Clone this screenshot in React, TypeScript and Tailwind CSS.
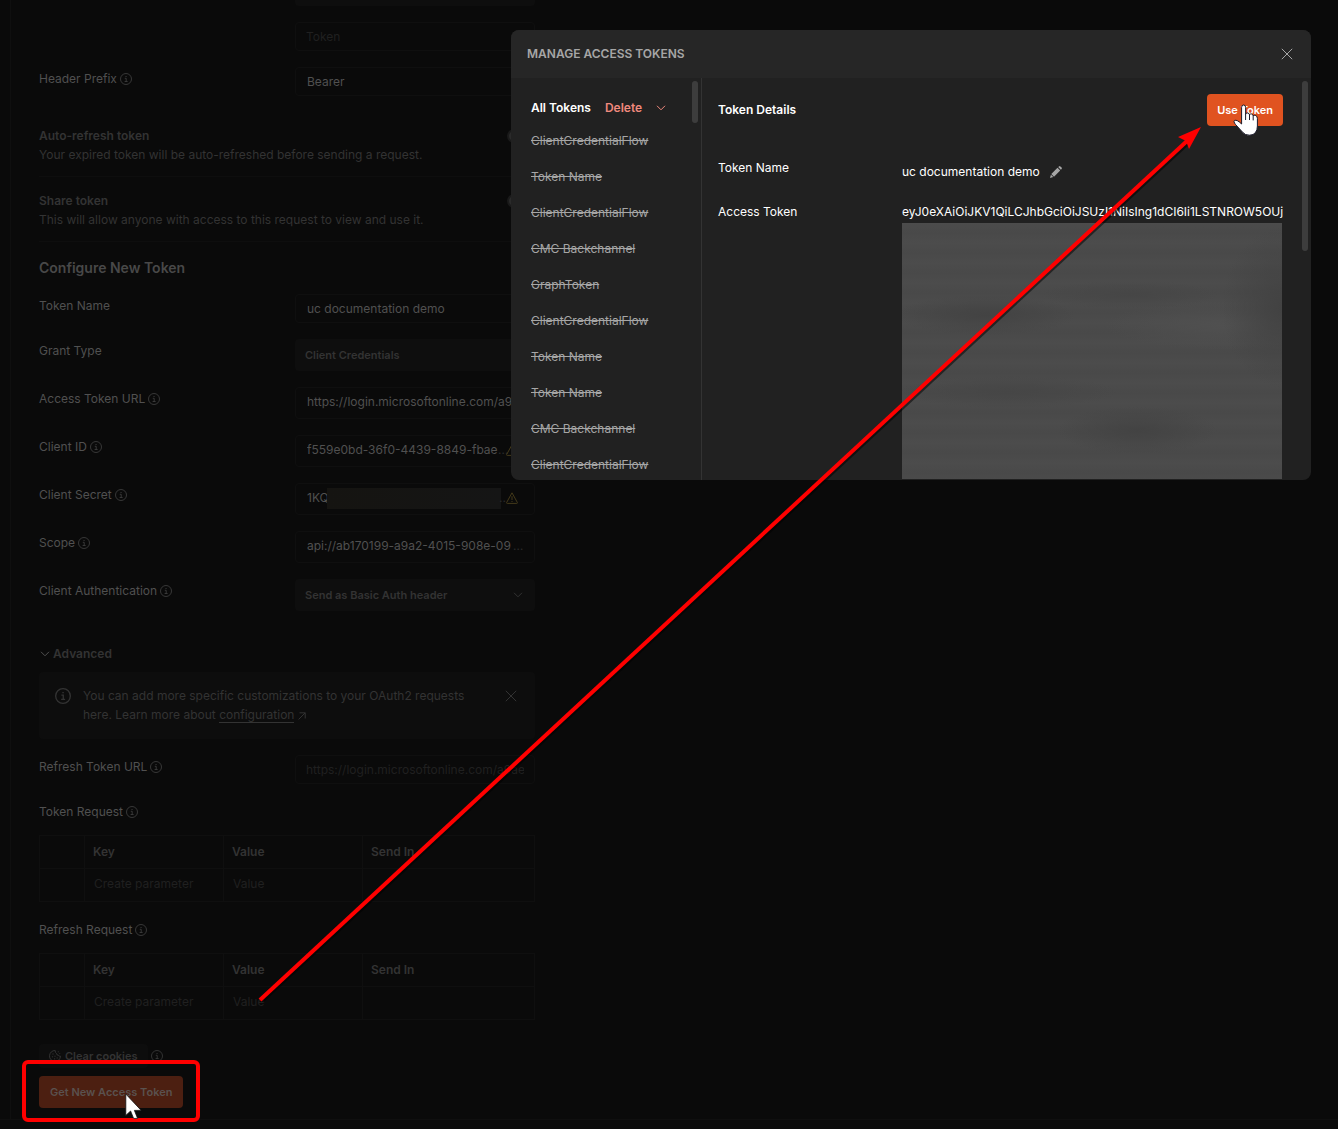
import type { ReactNode } from 'react';

function InfoIcon({ className = 'size-3' }: { className?: string }) {
  return (
    <svg viewBox="0 0 12 12" className={className} fill="none" stroke="currentColor" aria-hidden="true">
      <circle cx="6" cy="6" r="5.5" />
      <path d="M4.8 5.3H6.2V8.5M4.6 8.5H7.6" />
      <path d="M5.5 3.5H6.6" />
    </svg>
  );
}

function Chevron({ className = '' }: { className?: string }) {
  return (
    <svg viewBox="0 0 10 6" className={`h-[6px] w-[10px] ${className}`} fill="none" stroke="currentColor" aria-hidden="true">
      <path d="M1 0.8L5 4.8L9 0.8" />
    </svg>
  );
}

function Cross() {
  return (
    <svg viewBox="0 0 12 12" className="size-3" fill="none" stroke="currentColor" aria-hidden="true">
      <path d="M0.8 0.8L11.2 11.2M11.2 0.8L0.8 11.2" />
    </svg>
  );
}

function Warning() {
  return (
    <svg viewBox="0 0 12 12" className="size-3 shrink-0 text-[#443a1a]" fill="none" stroke="currentColor" aria-hidden="true">
      <path d="M6 0.8L11.4 10.6Q11.5 11.4 10.8 11.4H1.2Q0.5 11.4 0.6 10.6Z" strokeLinejoin="round" />
      <path d="M6 4.2V8M6 9V10" />
    </svg>
  );
}

function Cookie() {
  return (
    <svg viewBox="0 0 12 12" className="size-3" fill="none" stroke="currentColor" aria-hidden="true">
      <path d="M6.2 0.5A5.5 5.5 0 1 0 11.5 6.2Q10 6.6 9.4 5.2Q7.6 5.4 7.6 3.6Q6 3 6.2 0.5Z" strokeLinejoin="round" />
      <path d="M3.4 4H4.6M2.9 6.8H4.1M5.4 6.2H6.6M5 8.9H6.2M7.6 8H8.8M8.8 1.8H9.8M10.4 3.6H11.2" />
    </svg>
  );
}

function Row({ id, label, info, children }: { id: string; label: string; info?: boolean; children: ReactNode }) {
  return (
    <div className="flex items-start">
      <label htmlFor={id} className="flex h-6 w-64 shrink-0 items-center gap-[3px] text-[#505050]">
        {label}
        {info && <InfoIcon className="mb-px size-3 text-[#383838]" />}
      </label>
      {children}
    </div>
  );
}

const box = 'flex min-w-0 flex-1 items-center rounded-sm border border-[#0f0f0f] pl-[11px] text-[#505050]';

function Toggle({ id, title, text }: { id: string; title: string; text: string }) {
  return (
    <div className="flex items-start justify-between border-b border-[#0e0e0e] pt-[14px] pb-3 leading-[19px] text-[#333333]">
      <div>
        <label htmlFor={id} className="block font-semibold">{title}</label>
        <p>{text}</p>
      </div>
      <input
        id={id}
        type="checkbox"
        className="mt-[3px] h-[14px] w-7 appearance-none rounded-full border-2 border-[#1a1a1a] bg-[#2a2a2a]"
      />
    </div>
  );
}

function ParamTable({ title }: { title: string }) {
  return (
    <section>
      <h3 className="mb-[11px] flex h-6 items-center gap-[3px] text-[#505050]">
        {title}
        <InfoIcon className="mb-px size-3 text-[#383838]" />
      </h3>
      <table className="w-full table-fixed border-collapse text-left">
        <thead>
          <tr className="h-[33px] text-[#333333]">
            <th className="w-[45px] border border-[#0f0f0f]"></th>
            <th className="w-[139px] border border-[#0f0f0f] px-2 font-semibold">Key</th>
            <th className="w-[139px] border border-[#0f0f0f] px-2 font-semibold">Value</th>
            <th className="border border-[#0f0f0f] px-2 font-semibold">Send In</th>
          </tr>
        </thead>
        <tbody>
          <tr className="h-[33px]">
            <td className="border border-[#0f0f0f]"></td>
            <td className="border border-[#0f0f0f] px-[9px] pb-[2px]">
              <input aria-label={`${title} key`} placeholder="Create parameter" className="block w-full bg-transparent placeholder:text-[#202020]" />
            </td>
            <td className="border border-[#0f0f0f] px-[9px] pb-[2px]">
              <input aria-label={`${title} value`} placeholder="Value" className="block w-full bg-transparent placeholder:text-[#202020]" />
            </td>
            <td className="border border-[#0f0f0f]"></td>
          </tr>
        </tbody>
      </table>
    </section>
  );
}

function TokenForm() {
  return (
    <form className="flex w-[496px] flex-col gap-4" onSubmit={(e) => e.preventDefault()}>
      <div className="-mt-[26px] ml-64 h-8 rounded-sm bg-[#0e0e0e]" />
      <div className="ml-64 flex">
        <input aria-label="Token" placeholder="Token" className="h-[29px] w-full rounded-sm border border-[#0f0f0f] px-[10px] placeholder:text-[#202020]" />
      </div>
      <Row id="prefix" label="Header Prefix" info>
        <input id="prefix" defaultValue="Bearer" className={`${box} h-[29px]`} />
      </Row>
      <div>
        <Toggle id="auto" title="Auto-refresh token" text="Your expired token will be auto-refreshed before sending a request." />
        <Toggle id="share" title="Share token" text="This will allow anyone with access to this request to view and use it." />
      </div>
      <h2 className="text-sm font-semibold leading-5 text-[#484848]">Configure New Token</h2>
      <Row id="name" label="Token Name">
        <input id="name" defaultValue="uc documentation demo" className={`${box} h-[29px]`} />
      </Row>
      <Row id="grant" label="Grant Type">
        <select id="grant" className="h-8 min-w-0 flex-1 appearance-none rounded-sm bg-[#0e0e0e] px-[10px] text-[11px] font-semibold text-[#333333]">
          <option>Client Credentials</option>
        </select>
      </Row>
      <Row id="url" label="Access Token URL" info>
        <input id="url" defaultValue="https://login.microsoftonline.com/a9ae" className={`${box} h-8 pb-[3px]`} />
      </Row>
      <Row id="client" label="Client ID" info>
        <div className={`${box} h-8 pb-[2px]`}>
          <input id="client" defaultValue="f559e0bd-36f0-4439-8849-fbae" className="w-[191px] bg-transparent" />
          <span className="w-2 text-[#2a2a2a]">…</span>
          <Warning />
        </div>
      </Row>
      <Row id="secret" label="Client Secret" info>
        <div className={`${box} h-8 pb-[2px]`}>
          <input id="secret" defaultValue="1KQ" className="w-5 bg-transparent" />
          <span className="h-[21px] w-[174px] bg-linear-to-r from-[#151411] to-[#151515]" />
          <span className="flex w-[5px] justify-end text-[#2a2a2a]">..</span>
          <Warning />
        </div>
      </Row>
      <Row id="scope" label="Scope" info>
        <div className={`${box} h-8 pb-[2px]`}>
          <input id="scope" defaultValue="api://ab170199-a9a2-4015-908e-09" className="w-[206px] bg-transparent" />
          <span className="text-[#2a2a2a]">…</span>
        </div>
      </Row>
      <Row id="auth" label="Client Authentication" info>
        <div className="relative min-w-0 flex-1 text-[#333333]">
          <select id="auth" className="block h-8 w-full appearance-none rounded-sm bg-[#0e0e0e] px-[10px] text-[11px] font-semibold">
            <option>Send as Basic Auth header</option>
          </select>
          <Chevron className="pointer-events-none absolute top-[13px] right-3" />
        </div>
      </Row>
      <div className="mt-4">
        <button className="mb-2 flex h-[21px] items-center gap-[3px] px-px font-semibold text-[#333333]">
          <Chevron className="text-[#505050]" />
          Advanced
        </button>
        <div className="flex items-start rounded-sm bg-[#0d0d0d] px-4 pt-[14px] pb-[15px] text-[#333333]">
          <InfoIcon className="mt-[2px] mr-3 size-4 shrink-0" />
          <p className="flex-1 leading-[19px]">
            You can add more specific customizations to your OAuth2 requests
            <br />
            here. Learn more about{' '}
            <a href="#configuration" className="border-b border-[#333333]">configuration</a>
            <svg viewBox="0 0 8 8" className="ml-1 inline size-2" fill="none" stroke="currentColor" aria-hidden="true">
              <path d="M1.5 0.8H7.2V6.5M7.2 0.8L0.6 7.4" />
            </svg>
          </p>
          <button aria-label="Dismiss" className="mt-1 mr-[2px]">
            <Cross />
          </button>
        </div>
      </div>
      <Row id="refresh" label="Refresh Token URL" info>
        <input
          id="refresh"
          placeholder="https://login.microsoftonline.com/a9ae"
          className="h-[29px] min-w-0 flex-1 rounded-sm border border-[#0f0f0f] px-[10px] placeholder:text-[#202020]"
        />
      </Row>
      <ParamTable title="Token Request" />
      <ParamTable title="Refresh Request" />
      <div className="mt-2 flex flex-col items-start gap-2">
        <div className="flex items-center gap-[3px] text-[#333333]">
          <button className="flex h-6 items-center gap-1 rounded-sm bg-[#0d0d0d] px-[10px] text-[11px] font-semibold">
            <Cookie />
            Clear cookies
          </button>
          <InfoIcon />
        </div>
        <div className="relative">
          <button className="h-8 rounded-sm bg-[#4c1f11] px-[11px] text-[11px] font-semibold text-[#5a514e]">Get New Access Token</button>
          <div className="absolute -inset-x-[17px] -top-4 -bottom-[14px] rounded-md border-4 border-[#ff0000]" />
          <svg viewBox="0 0 18 26" className="absolute top-[17px] left-[86px] h-[26px] w-[18px]" aria-hidden="true">
            <path d="M0.8 1V22.4L5.6 18L8.6 25.4H12.6L9.4 17.4H16.2Z" fill="#fff" stroke="#111" strokeWidth="0.8" />
          </svg>
        </div>
      </div>
    </form>
  );
}

const tokens = [
  'ClientCredentialFlow',
  'Token Name',
  'ClientCredentialFlow',
  'CMC Backchannel',
  'GraphToken',
  'ClientCredentialFlow',
  'Token Name',
  'Token Name',
  'CMC Backchannel',
  'ClientCredentialFlow',
];

function HandCursor() {
  return (
    <svg viewBox="0 0 26 32" className="pointer-events-none absolute top-[10px] left-[26px] h-8 w-[26px]" aria-hidden="true">
      <path
        d="M8.6 18V3.4Q8.6 1 10.6 1Q12.6 1 12.6 3.4V10.2Q13 8.8 14.6 9Q16.4 9.2 16.5 10.8Q17 9.6 18.4 9.9Q20 10.2 20.1 11.8Q20.8 10.8 22.2 11.3Q24.4 12 24.4 14.4V22Q24.4 26.4 22.4 28.6Q20.6 31.2 16.4 31.2Q12 31.2 9.8 28.4L2.6 20.6Q0 17.2 1.6 16.4Q4 15.4 8.6 20Z"
        fill="#fff"
        stroke="#1b1b2b"
      />
      <path d="M12.6 10V16M16.5 10.8V16M20.2 11.8V16.4" stroke="#1b1b2b" fill="none" />
    </svg>
  );
}

function TokenDialog() {
  return (
    <div
      role="dialog"
      aria-labelledby="dialog-title"
      className="flex h-[450px] w-[800px] max-w-full flex-col overflow-hidden rounded-lg bg-[#212121] text-white"
    >
      <header className="flex h-12 shrink-0 items-center justify-between bg-[#262626] px-4 text-[#a6a6a6]">
        <h1 id="dialog-title" className="font-semibold">MANAGE ACCESS TOKENS</h1>
        <button aria-label="Close" className="mr-[2px]">
          <Cross />
        </button>
      </header>
      <div className="flex min-h-0 flex-1">
        <aside className="flex w-[191px] shrink-0 justify-between overflow-hidden border-r border-[#333333] pl-5">
          <div className="pt-[15px]">
            <div className="flex h-[30px] items-center font-semibold">
              <span>All Tokens</span>
              <button className="ml-[14px] flex items-center gap-[14px] text-[#f0897d]">
                Delete
                <Chevron />
              </button>
            </div>
            <ul>
              {tokens.map((t, i) => (
                <li key={i} className="flex h-9 items-center text-[#a6a6a6]">
                  <s>{t}</s>
                </li>
              ))}
            </ul>
          </div>
          <div className="mt-[3px] mr-[3px] h-[42px] w-[6px] rounded-full bg-[#3d3d3d]" />
        </aside>
        <section className="flex min-w-0 flex-1 flex-col pt-4 pb-px pl-4">
          <div className="flex items-center justify-between">
            <h2 className="font-semibold">Token Details</h2>
            <div className="relative">
              <button className="h-8 rounded-sm bg-[#e05320] px-[10px] text-[11px] font-semibold">Use Token</button>
              <HandCursor />
            </div>
          </div>
          <dl className="mt-8 grid min-h-0 flex-1 grid-cols-[184px_1fr] grid-rows-[28px_1fr] gap-y-4 leading-5">
            <dt>Token Name</dt>
            <dd className="flex items-center gap-[10px]">
              uc documentation demo
              <button aria-label="Edit token name" className="text-[#a6a6a6]">
                <svg viewBox="0 0 12 12" className="size-3" fill="currentColor" aria-hidden="true">
                  <path d="M8.2 1.1L9 0.4Q9.7 -0.2 10.4 0.4L11.6 1.6Q12.2 2.3 11.6 3L10.9 3.8ZM7.5 1.8L10.2 4.5L4 10.7L1.3 8ZM0.9 8.7L3.3 11.1L0 12Z" />
                </svg>
              </button>
            </dd>
            <dt>Access Token</dt>
            <dd className="flex min-w-0 flex-col">
              <span className="whitespace-nowrap">eyJ0eXAiOiJKV1QiLCJhbGciOiJSUzI1NiIsIng1dCI6Ii1LSTNROW5OUj</span>
              <div className="mt-px mr-px flex-1 bg-[#4b4b4b] bg-[radial-gradient(90px_20px_at_22%_36%,#434343,transparent),radial-gradient(80px_24px_at_62%_81%,#434343,transparent),radial-gradient(90px_14px_at_60%_28%,#464646,transparent),radial-gradient(60px_80px_at_100%_33%,#424242,transparent),radial-gradient(110px_16px_at_28%_66%,#464646,transparent),radial-gradient(120px_24px_at_85%_40%,#505050,transparent),repeating-linear-gradient(180deg,#4c4c4c_0,#494949_10px,#4c4c4c_20px)]" />
            </dd>
          </dl>
        </section>
        <div className="mt-[3px] mr-[3px] ml-[19px] h-[170px] w-[6px] shrink-0 rounded-full bg-[#3d3d3d]" />
      </div>
    </div>
  );
}

export default function App() {
  return (
    <div className="relative min-h-screen overflow-hidden bg-[#0a0a0a] font-['Inter',sans-serif] text-xs">
      <main className="border-b border-[#0f0f0f] pl-[10px]">
        <div className="border-l border-[#0f0f0f] pb-[11px] pl-7">
          <TokenForm />
        </div>
      </main>
      <div className="absolute inset-x-0 top-0 flex justify-end pt-[30px] pr-[27px]">
        <TokenDialog />
      </div>
      <svg viewBox="0 0 1338 1129" className="pointer-events-none absolute top-0 left-0 h-[1129px] w-[1338px]" aria-hidden="true">
        <path d="M262 1001L1188 143" stroke="#000" strokeOpacity="0.5" strokeWidth="4" />
        <path d="M260 1000L1187 141" stroke="#ff0000" strokeWidth="4" />
        <path d="M1201 127L1178 137L1186 141L1189 149Z" fill="#ff0000" />
      </svg>
    </div>
  );
}
